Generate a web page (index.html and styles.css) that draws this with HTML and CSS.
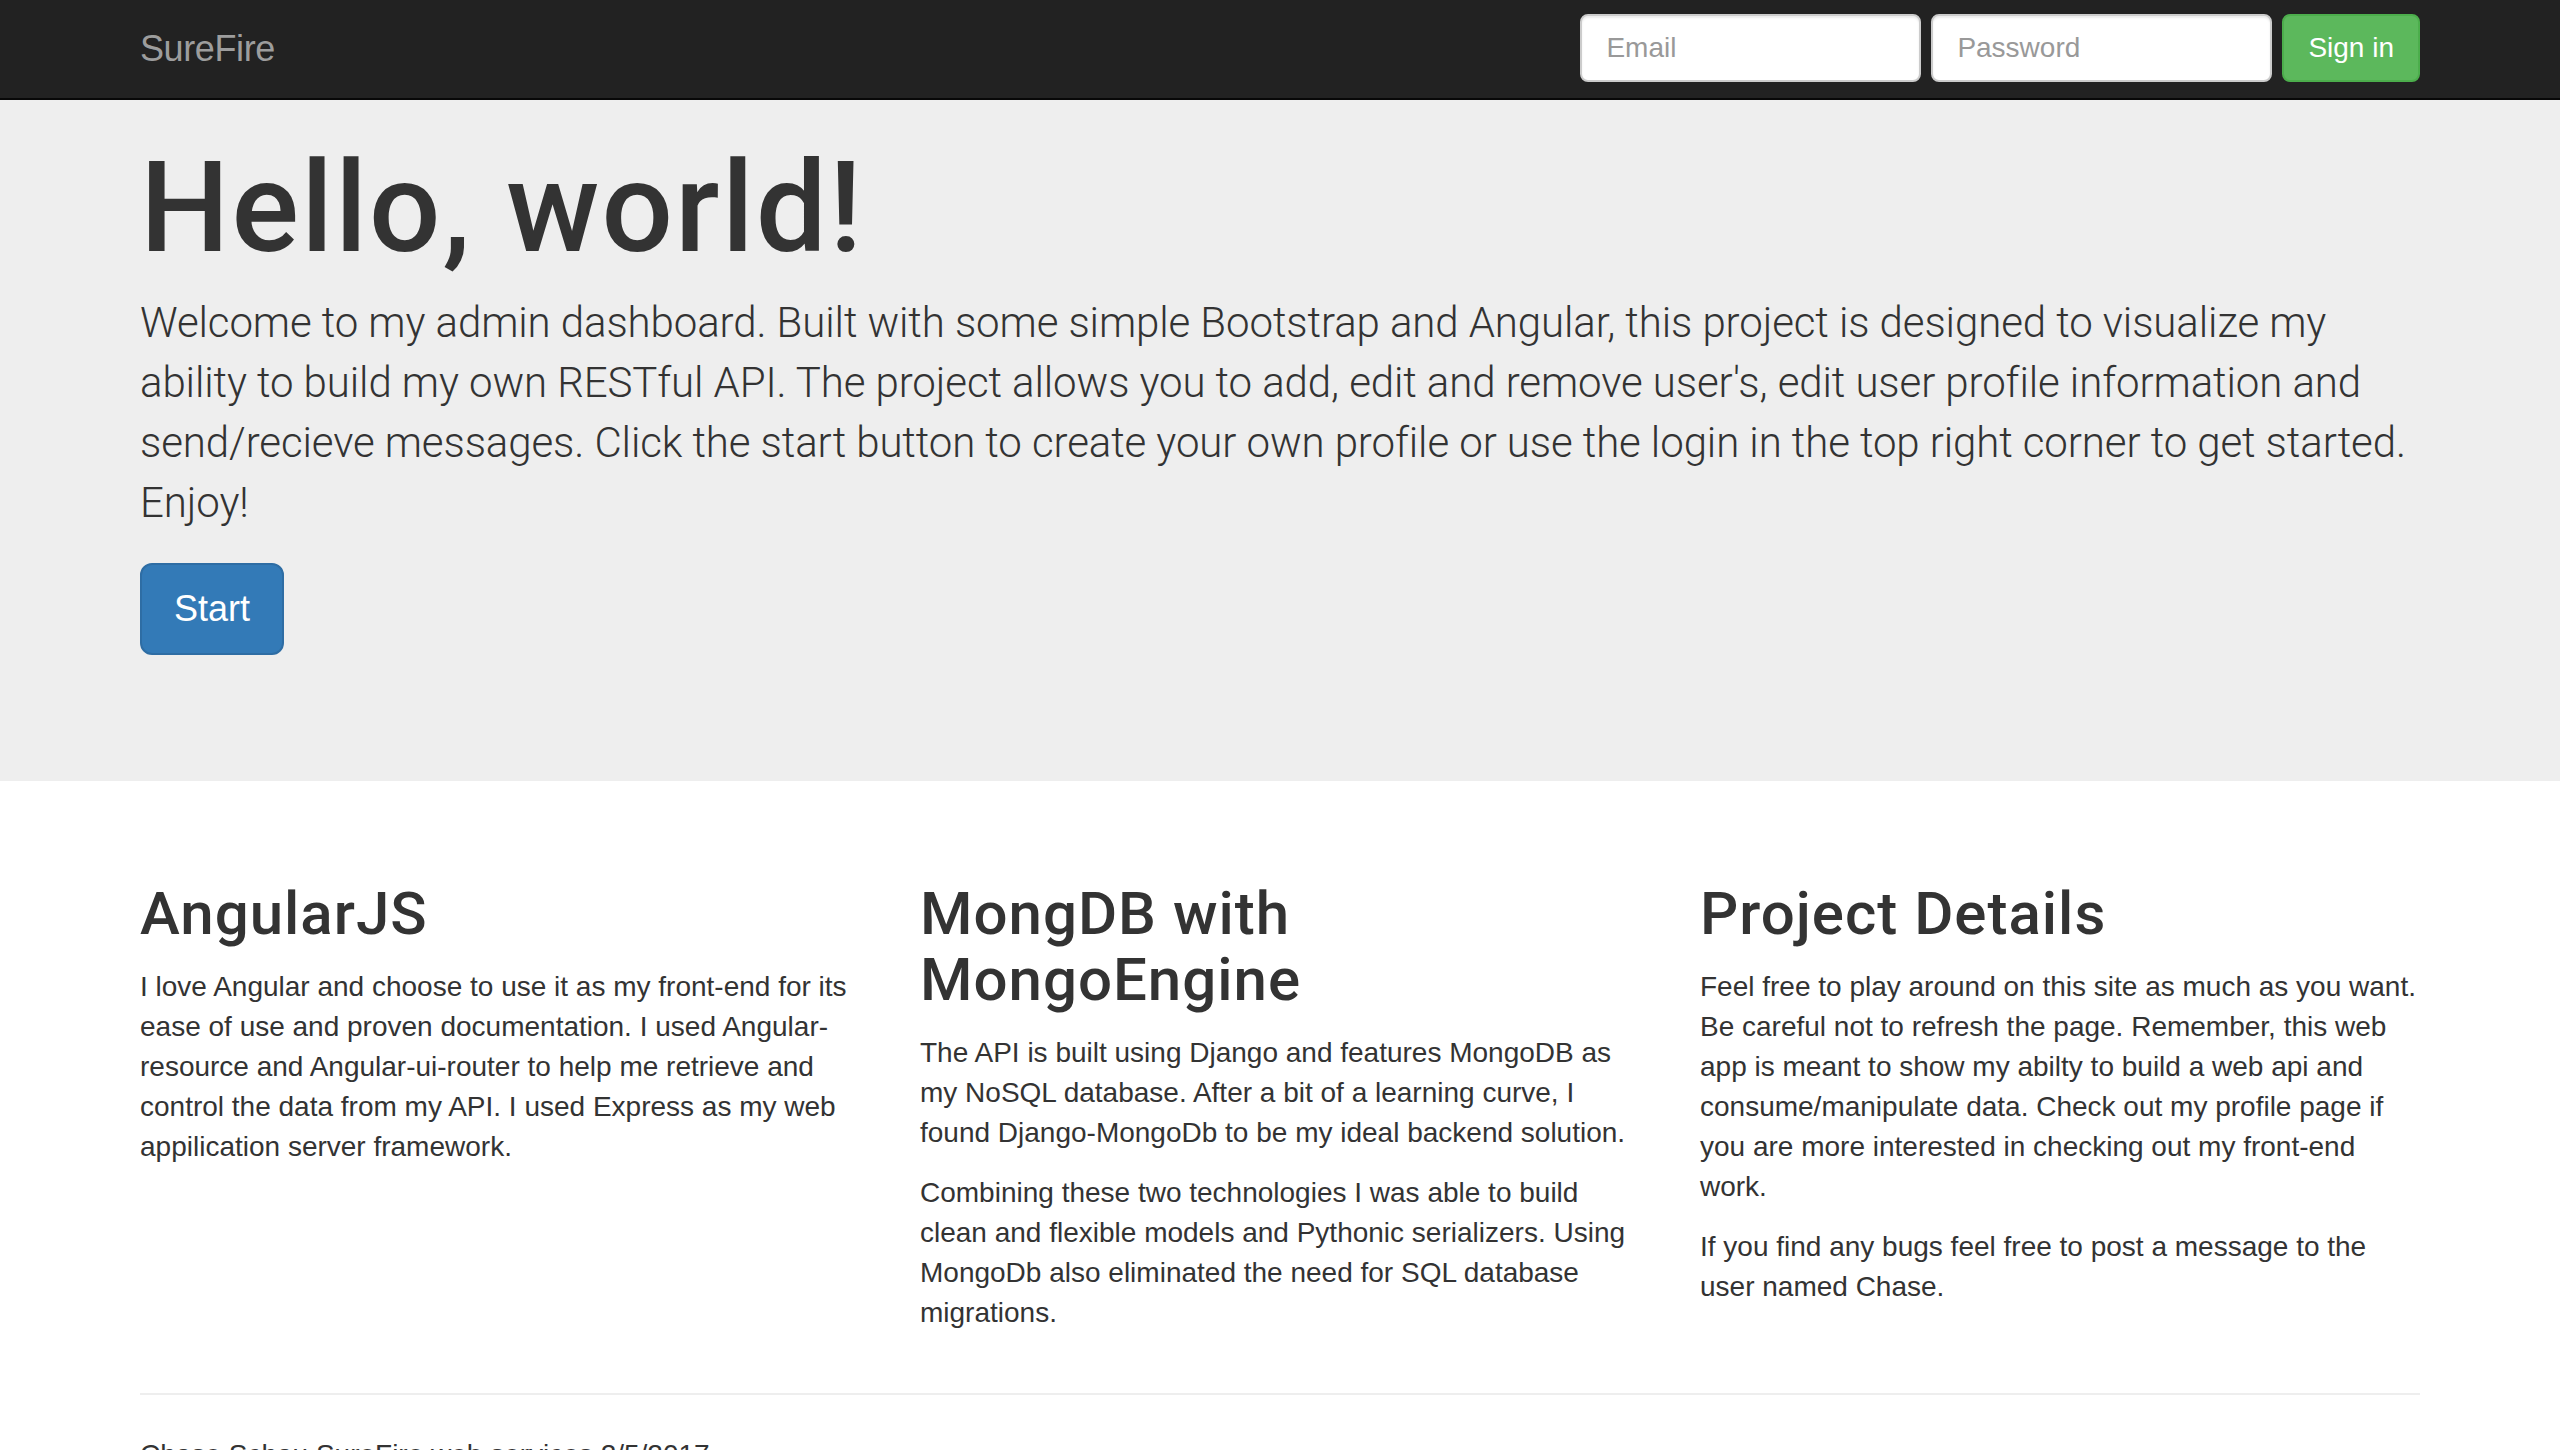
FILE: index.html
```html
<!DOCTYPE html>
<html lang="en">
<head>
<meta charset="utf-8">
<title>SureFire</title>
<link rel="stylesheet" href="styles.css">
</head>
<body>
<nav class="navbar">
  <div class="container nav-inner">
    <a class="brand" href="#">SureFire</a>
    <form class="nav-form">
      <input class="form-control" type="text" placeholder="Email">
      <input class="form-control" type="password" placeholder="Password">
      <button type="button" class="btn btn-success">Sign in</button>
    </form>
  </div>
</nav>
<div class="jumbotron">
  <div class="container">
    <h1>Hello, world!</h1>
    <p class="lead">Welcome to my admin dashboard. Built with some simple Bootstrap and Angular, this project is designed to visualize my ability to build my own RESTful API. The project allows you to add, edit and remove user's, edit user profile information and send/recieve messages. Click the start button to create your own profile or use the login in the top right corner to get started. Enjoy!</p>
    <p class="lead-btn"><a class="btn btn-primary btn-lg" href="#">Start</a></p>
  </div>
</div>
<div class="container">
  <div class="row">
    <div class="col">
      <h2>AngularJS</h2>
      <p>I love Angular and choose to use it as my front-end for its ease of use and proven documentation. I used Angular-resource and Angular-ui-router to help me retrieve and control the data from my API. I used Express as my web appilication server framework.</p>
    </div>
    <div class="col">
      <h2>MongDB with MongoEngine</h2>
      <p>The API is built using Django and features MongoDB as my NoSQL database. After a bit of a learning curve, I found Django-MongoDb to be my ideal backend solution.</p>
      <p>Combining these two technologies I was able to build clean and flexible models and Pythonic serializers. Using MongoDb also eliminated the need for SQL database migrations.</p>
    </div>
    <div class="col">
      <h2>Project Details</h2>
      <p>Feel free to play around on this site as much as you want. Be careful not to refresh the page. Remember, this web app is meant to show my abilty to build a web api and consume/manipulate data. Check out my profile page if you are more interested in checking out my front-end work.</p>
      <p>If you find any bugs feel free to post a message to the user named Chase.</p>
    </div>
  </div>
  <hr class="divider">
  <footer class="footer">
    <p>Chase Schau SureFire web services 2/5/2017</p>
  </footer>
</div>
</body>
</html>
```
FILE: styles.css
```css
* { box-sizing: border-box; }
html, body { margin: 0; padding: 0; }
body {
  font-family: "Liberation Sans", Arial, Helvetica, sans-serif;
  font-size: 28px;
  line-height: 40px;
  color: #333;
  background: #fff;
}
.container {
  width: 2340px;
  margin: 0 auto;
  padding: 0 30px;
}
.navbar {
  background: #222;
  border-bottom: 2px solid #080808;
  height: 100px;
}
.nav-inner {
  display: flex;
  justify-content: space-between;
  align-items: flex-start;
}
.brand {
  display: block;
  color: #9d9d9d;
  text-decoration: none;
  font-size: 36px;
  line-height: 40px;
  padding: 29px 0;
  letter-spacing: -0.4px;
}
.nav-form {
  display: flex;
  gap: 10px;
  margin-top: 14px;
}
.form-control {
  width: 341px;
  height: 68px;
  padding: 12px 24px;
  font-family: inherit;
  font-size: 28px;
  color: #555;
  background: #fff;
  border: 2px solid #ccc;
  border-radius: 8px;
  box-shadow: inset 0 2px 2px rgba(0,0,0,.075);
  outline: none;
}
.form-control::placeholder { color: #999; }
.btn {
  display: inline-block;
  font-family: inherit;
  font-size: 28px;
  line-height: 40px;
  padding: 12px 24px;
  border: 2px solid transparent;
  border-radius: 8px;
  color: #fff;
  text-decoration: none;
  cursor: pointer;
}
.btn-success {
  background: #5cb85c;
  border-color: #4cae4c;
  height: 68px;
}
.btn-primary {
  background: #337ab7;
  border-color: #2e6da4;
}
.btn-lg {
  font-size: 36px;
  line-height: 48px;
  padding: 20px 32px;
  border-radius: 12px;
}
.jumbotron {
  background: #eee;
  padding: 39px 0 96px;
  margin-bottom: 60px;
}
.jumbotron h1 {
  font-family: Roboto, "Liberation Sans", sans-serif;
  font-size: 126px;
  line-height: 1.1;
  font-weight: 500;
  letter-spacing: 2px;
  margin: 0 0 15px;
}
.lead {
  font-family: Roboto, "Liberation Sans", sans-serif;
  font-weight: 300;
  font-size: 42px;
  line-height: 60px;
  letter-spacing: -0.1px;
  margin: 0 0 30px;
}
.lead-btn {
  margin: 0 0 30px;
  display: flex;
}
.row {
  display: grid;
  grid-template-columns: repeat(3, 1fr);
  margin: 0 -30px;
}
.col {
  padding: 0 30px;
}
.col h2 {
  font-family: Roboto, "Liberation Sans", sans-serif;
  font-size: 60px;
  line-height: 1.1;
  font-weight: 500;
  letter-spacing: 1px;
  margin: 40px 0 20px;
}
.col p {
  margin: 0 0 20px;
}
.divider {
  border: 0;
  border-top: 2px solid #eee;
  margin: 40px 0;
}
.footer p { margin: 0 0 20px; }
```
